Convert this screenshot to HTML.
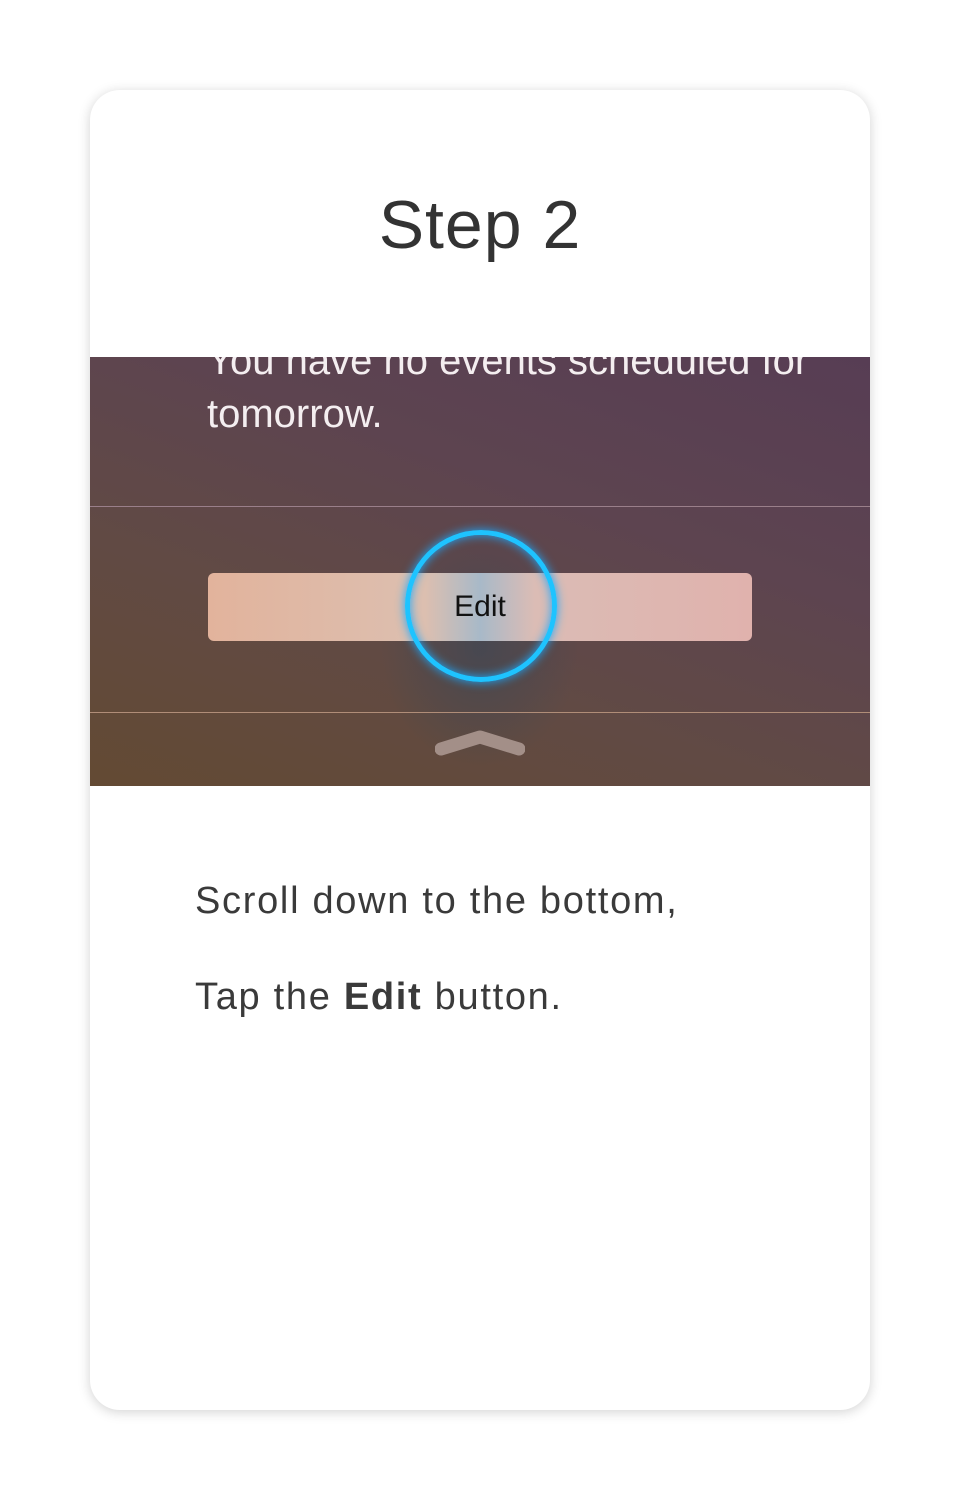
<!DOCTYPE html>
<html><head><style>
body{margin:0;width:960px;height:1500px;background:#fff;font-family:"Liberation Sans",sans-serif;position:relative;overflow:hidden}
.card{position:absolute;left:90px;top:90px;width:780px;height:1320px;border-radius:30px;background:#fff;box-shadow:0 2px 12px rgba(0,0,0,.18);overflow:hidden}
.title{position:absolute;top:96px;left:0;width:780px;text-align:center;font-size:68px;color:#333;letter-spacing:1px}
.img{position:absolute;left:0;top:267px;width:780px;height:429px;overflow:hidden;background:linear-gradient(200deg,#573d54 0%,#5d4450 35%,#614a44 65%,#634a33 100%)}
.t1,.t2{position:absolute;left:117px;color:#f4eef0;font-size:40px}
.t1{top:-18px}.t2{top:35px}
.ln{position:absolute;left:0;width:780px;height:1px}
.btn{position:absolute;left:118px;top:216px;width:544px;height:68px;border-radius:6px;background:linear-gradient(90deg,#e2b39c,#dcbfb0 40%,#a8b9c8 50%,#dbbcb5 60%,#e0b2ad);text-align:center;line-height:68px;font-size:30px;color:#111}
.glow{position:absolute;left:290px;top:170px;width:200px;height:240px;border-radius:50%;background:radial-gradient(ellipse,rgba(50,70,90,.55),rgba(50,70,90,0) 70%)}
.circ{position:absolute;left:315px;top:173px;width:142px;height:142px;border:5px solid #1ec3ff;border-radius:50%;box-shadow:0 0 10px #1aa8ff,inset 0 0 10px #1aa8ff}
.body{position:absolute;left:105px;font-size:38px;color:#3a3a3a;letter-spacing:1.7px}
</style></head><body>
<div class="card">
<div class="title">Step 2</div>
<div class="img">
<div class="t1">You have no events scheduled for</div>
<div class="t2">tomorrow.</div>
<div class="ln" style="top:149px;background:#9a7f8a"></div>
<div class="glow"></div>
<div class="btn">Edit</div>
<div class="circ"></div>
<div class="ln" style="top:355px;background:#b08d78"></div>
<svg style="position:absolute;left:345px;top:372px" width="90" height="30"><path d="M6 20 L45 8 L84 20" stroke="#a38f88" stroke-width="13" stroke-linecap="round" stroke-linejoin="round" fill="none"/></svg>
</div>
<div class="body" style="top:790px">Scroll down to the bottom,</div>
<div class="body" style="top:886px">Tap the <b>Edit</b> button.</div>
</div>
</body></html>
